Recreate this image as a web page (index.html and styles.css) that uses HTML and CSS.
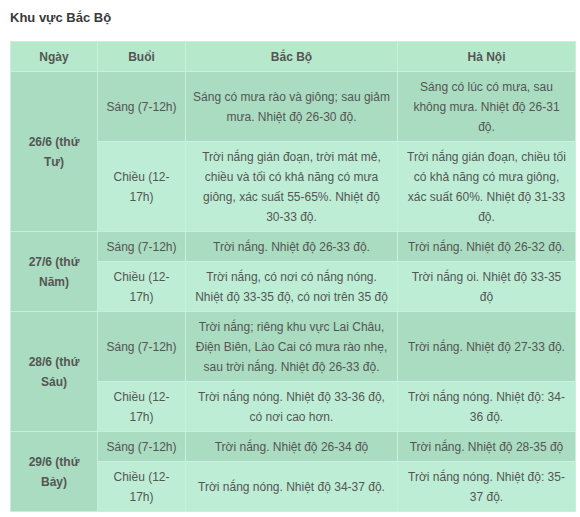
FILE: index.html
```html
<!DOCTYPE html>
<html lang="vi">
<head>
<meta charset="utf-8">
<link rel="stylesheet" href="styles.css">
</head>
<body>
<h3 class="title">Khu vực Bắc Bộ</h3>
<table class="forecast">
  <colgroup>
    <col class="c-day"><col class="c-part"><col class="c-bb"><col class="c-hn">
  </colgroup>
  <thead>
    <tr><th>Ngày</th><th>Buổi</th><th>Bắc Bộ</th><th>Hà Nội</th></tr>
  </thead>
  <tbody>
    <tr class="dark">
      <td class="day" rowspan="2">26/6 (thứ Tư)</td>
      <td>Sáng (7-12h)</td>
      <td>Sáng có mưa rào và giông; sau giảm<br>mưa. Nhiệt độ 26-30 độ.</td>
      <td>Sáng có lúc có mưa, sau<br>không mưa. Nhiệt độ 26-31<br>độ.</td>
    </tr>
    <tr class="light">
      <td>Chiều (12-17h)</td>
      <td>Trời nắng gián đoạn, trời mát mẻ,<br>chiều và tối có khả năng có mưa<br>giông, xác suất 55-65%. Nhiệt độ<br>30-33 độ.</td>
      <td>Trời nắng gián đoạn, chiều tối<br>có khả năng có mưa giông,<br>xác suất 60%. Nhiệt độ 31-33<br>độ.</td>
    </tr>
    <tr class="dark">
      <td class="day" rowspan="2">27/6 (thứ Năm)</td>
      <td>Sáng (7-12h)</td>
      <td>Trời nắng. Nhiệt độ 26-33 độ.</td>
      <td>Trời nắng. Nhiệt độ 26-32 độ.</td>
    </tr>
    <tr class="light">
      <td>Chiều (12-17h)</td>
      <td>Trời nắng, có nơi có nắng nóng.<br>Nhiệt độ 33-35 độ, có nơi trên 35 độ</td>
      <td>Trời nắng oi. Nhiệt độ 33-35<br>độ</td>
    </tr>
    <tr class="dark">
      <td class="day" rowspan="2">28/6 (thứ Sáu)</td>
      <td>Sáng (7-12h)</td>
      <td>Trời nắng; riêng khu vực Lai Châu,<br>Điện Biên, Lào Cai có mưa rào nhẹ,<br>sau trời nắng. Nhiệt độ 26-33 độ.</td>
      <td>Trời nắng. Nhiệt độ 27-33 độ.</td>
    </tr>
    <tr class="light">
      <td>Chiều (12-17h)</td>
      <td>Trời nắng nóng. Nhiệt độ 33-36 độ,<br>có nơi cao hơn.</td>
      <td>Trời nắng nóng. Nhiệt độ: 34-<br>36 độ.</td>
    </tr>
    <tr class="dark">
      <td class="day" rowspan="2">29/6 (thứ Bảy)</td>
      <td>Sáng (7-12h)</td>
      <td>Trời nắng. Nhiệt độ 26-34 độ</td>
      <td>Trời nắng. Nhiệt độ 28-35 độ</td>
    </tr>
    <tr class="light">
      <td>Chiều (12-17h)</td>
      <td>Trời nắng nóng. Nhiệt độ 34-37 độ.</td>
      <td>Trời nắng nóng. Nhiệt độ: 35-<br>37 độ.</td>
    </tr>
  </tbody>
</table>
</body>
</html>
```
FILE: styles.css
```css
html, body {
  margin: 0;
  padding: 0;
  background: #ffffff;
}
body {
  padding: 8px 5px 0 10px;
  font-family: "Liberation Sans", Arial, sans-serif;
  color: #555555;
}
.title {
  margin: 0 0 13px 0;
  font-size: 13px;
  line-height: 20px;
  font-weight: bold;
  color: #3a3a3a;
}
.forecast {
  width: 565px;
  table-layout: fixed;
  border-collapse: collapse;
  font-size: 12px;
  line-height: 20px;
  border: 1px solid #d6e6dc;
}
.c-day { width: 87px; }
.c-part { width: 88px; }
.c-bb { width: 212px; }
.c-hn { width: 178px; }
.forecast th,
.forecast td {
  padding: 5px 5px 4px 5px;
  text-align: center;
  vertical-align: middle;
  border: 1px solid #c9f0da;
}
.forecast th {
  background: #b6e9cc;
  font-weight: bold;
  color: #555555;
}
.forecast tr.dark td {
  background: #a9dcc0;
}
.forecast tr.light td {
  background: #bdeed5;
}
.forecast td.day {
  font-weight: bold;
  padding-left: 12px;
  padding-right: 12px;
}
```
